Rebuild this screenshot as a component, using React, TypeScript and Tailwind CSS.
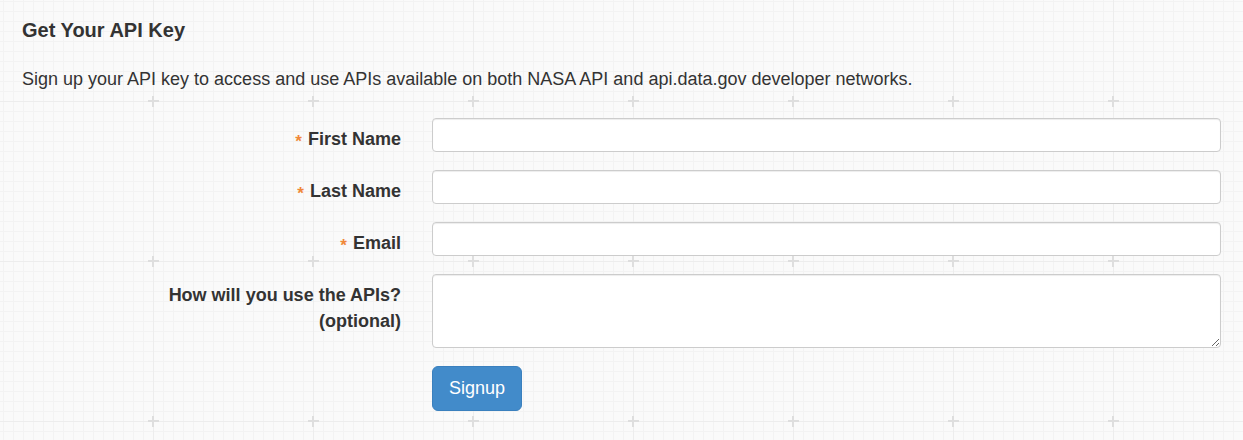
import { useState } from 'react'

// фон: мелкая сетка + крупные линии с плюсиками
function GridBg() {
  const fine = Array.from({ length: 16 }, (_, i) => i * 10)
  return (
    <svg className="absolute inset-0 h-full w-full" aria-hidden="true">
      <defs>
        <pattern id="grid" width="160" height="160" x="73" y="21" patternUnits="userSpaceOnUse">
          <rect width="160" height="160" fill="#fafafa" />
          {fine.map((v) => (
            <g key={v}>
              <rect x={v} y="0" width="1" height="160" fill="#f3f3f3" />
              <rect x="0" y={v} width="160" height="1" fill="#f3f3f3" />
            </g>
          ))}
          <rect x="80" y="0" width="1" height="160" fill="#ededed" />
          <rect x="0" y="80" width="160" height="1" fill="#ededed" />
          <rect x="75" y="79" width="11" height="2" fill="#dedede" />
          <rect x="79" y="75" width="2" height="11" fill="#dedede" />
        </pattern>
      </defs>
      <rect width="100%" height="100%" fill="url(#grid)" />
    </svg>
  )
}

function Label({ text, required }: { text: React.ReactNode; required?: boolean }) {
  return (
    <label className="self-start pt-[8px] text-right text-[18px] font-bold leading-[26px] text-[#333]">
      {required && (
        <span className="mr-[6px] align-[-2px] text-[17px] leading-none text-[#f0883a]">*</span>
      )}
      {text}
    </label>
  )
}

const inputCls =
  'h-[34px] w-full rounded-[4px] border border-[#ccc] bg-white px-3 text-[14px] text-[#555] shadow-[inset_0_1px_1px_rgba(0,0,0,0.075)] outline-none'

export default function App() {
  const [form, setForm] = useState({ first: '', last: '', email: '', use: '' })

  return (
    <div className="relative min-h-screen overflow-hidden font-['Liberation_Sans',Arial,sans-serif] text-[#333]">
      <GridBg />
      <div className="relative px-[22px] pt-[19px]">
        <h2 className="text-[20px] font-bold leading-[22px]">Get Your API Key</h2>
        <p className="mt-[25px] text-[18px] leading-[26px]">
          Sign up your API key to access and use APIs available on both NASA API and api.data.gov developer networks.
        </p>

        <form
          className="mt-[26px] grid grid-cols-[379px_1fr] items-start gap-x-[31px] gap-y-[18px]"
          onSubmit={(e) => e.preventDefault()}
        >
          <Label text="First Name" required />
          <input
            className={inputCls}
            value={form.first}
            onChange={(e) => setForm({ ...form, first: e.target.value })}
          />

          <Label text="Last Name" required />
          <input
            className={inputCls}
            value={form.last}
            onChange={(e) => setForm({ ...form, last: e.target.value })}
          />

          <Label text="Email" required />
          <input
            type="email"
            className={inputCls}
            value={form.email}
            onChange={(e) => setForm({ ...form, email: e.target.value })}
          />

          <Label
            text={
              <>
                How will you use the APIs?
                <br />
                (optional)
              </>
            }
          />
          <textarea
            className="block h-[74px] w-full rounded-[4px] border border-[#ccc] bg-white px-3 py-[6px] text-[14px] text-[#555] shadow-[inset_0_1px_1px_rgba(0,0,0,0.075)] outline-none"
            value={form.use}
            onChange={(e) => setForm({ ...form, use: e.target.value })}
          />

          <div />
          <div>
            <button
              type="submit"
              className="h-[45px] w-[90px] rounded-[6px] border border-[#3a80be] bg-[#428bca] text-[18px] text-white"
            >
              Signup
            </button>
          </div>
        </form>
      </div>
    </div>
  )
}
